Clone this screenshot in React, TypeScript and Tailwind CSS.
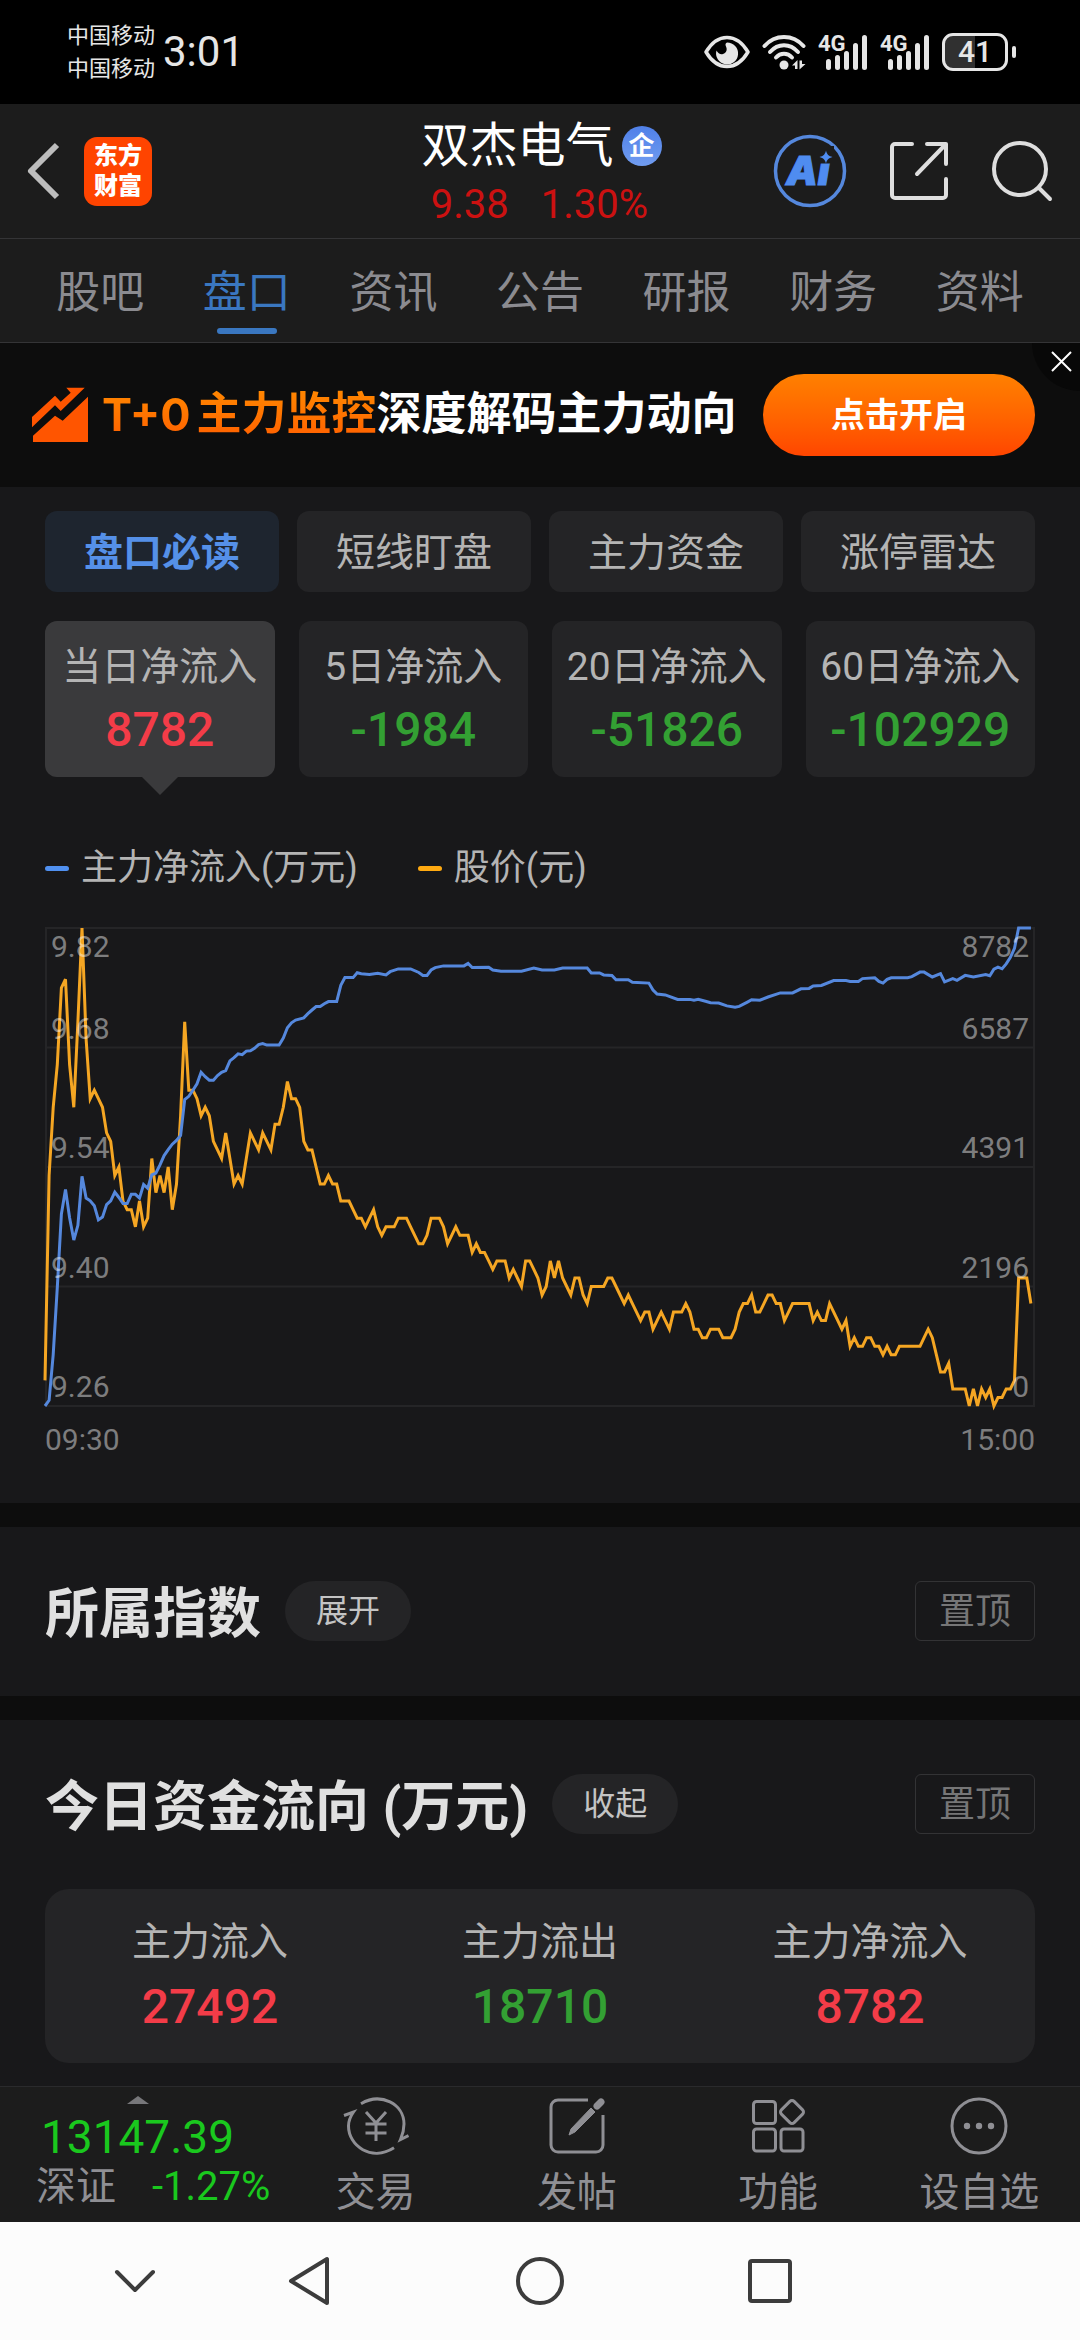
import type { ReactNode } from 'react';

const TABS = ['股吧', '盘口', '资讯', '公告', '研报', '财务', '资料'];
const CHIPS = ['盘口必读', '短线盯盘', '主力资金', '涨停雷达'];
const PERIODS = [
  { label: '当日净流入', value: '8782', up: true },
  { label: '5日净流入', value: '-1984', up: false },
  { label: '20日净流入', value: '-51826', up: false },
  { label: '60日净流入', value: '-102929', up: false },
];
const TOTALS = [
  { label: '主力流入', value: '27492', up: true },
  { label: '主力流出', value: '18710', up: false },
  { label: '主力净流入', value: '8782', up: true },
];

// Price per minute, in cents above 9.26
const PRICE = [
  3, 27, 35, 40, 49, 50, 40, 35, 45, 56, 43, 36, 37, 36, 35, 32, 31, 27, 28, 24, 23, 23, 21, 24, 21, 22, 29, 25, 27, 25,
  28, 23, 26, 34, 45, 37, 37, 36, 34, 35, 34, 31, 30, 29, 32, 29, 26, 27, 26, 29, 32, 31, 30, 32, 31, 30, 33, 33, 35, 38,
  36, 36, 35, 31, 30, 30, 28, 26, 26, 27, 26, 26, 24, 24, 24, 23, 22, 22, 21, 22, 23, 21, 20, 21, 21, 21, 22, 22, 22, 21,
  20, 19, 19, 20, 22, 22, 22, 21, 19, 20, 21, 20, 20, 20, 18, 19, 18, 18, 17, 16, 17, 17, 17, 15, 16, 15, 14, 17, 17, 16,
  15, 13, 14, 17, 15, 17, 15, 14, 13, 15, 15, 13, 12, 14, 14, 14, 14, 15, 15, 14, 13, 12, 13, 12, 11, 10, 11, 11, 9, 10,
  11, 10, 9, 11, 11, 11, 12, 11, 9, 9, 8, 8, 9, 9, 9, 8, 8, 8, 9, 11, 12, 12, 13, 11, 11, 12, 13, 13, 12, 12,
  10, 11, 12, 12, 12, 12, 12, 10, 11, 10, 10, 12, 11, 10, 9, 10, 7, 8, 7, 7, 8, 8, 7, 7, 6, 7, 6, 6, 7, 7,
  7, 7, 7, 7, 8, 9, 8, 6, 4, 4, 5, 2, 2, 2, 2, 0, 2, 0, 2, 1, 2, 0, 1, 1, 2, 2, 3, 15, 15, 15, 12,
];

// [minute, net inflow]
const FLOW: [number, number][] = [
  [0, 0], [1, 105], [2, 945], [3, 2180], [4, 3530], [5, 3980], [6, 3460], [7, 3050], [8, 3320], [9, 4220], [10, 3820],
  [11, 3770], [12, 3680], [13, 3420], [14, 3470], [15, 3700], [16, 3770], [17, 3930], [18, 3830], [19, 3720], [20, 3720],
  [21, 3890], [22, 3890], [23, 3820], [24, 4070], [25, 4000], [26, 4245], [27, 4280], [28, 4430], [29, 4600], [30, 4710],
  [31, 4810], [32, 4880], [33, 4970], [34, 5630], [35, 5690], [36, 5800], [37, 5920], [38, 6130], [39, 6050], [40, 5985],
  [41, 5985], [42, 6070], [43, 6130], [44, 6160], [45, 6340], [46, 6400], [47, 6470], [48, 6455], [49, 6520], [50, 6525],
  [51, 6570], [52, 6640], [53, 6660], [54, 6630], [57, 6630], [58, 6760], [59, 6950], [60, 7040], [61, 7090], [63, 7130],
  [64, 7210], [65, 7275], [66, 7340], [67, 7340], [68, 7390], [69, 7430], [71, 7430], [72, 7730], [73, 7870], [75, 7870],
  [76, 7960], [77, 7940], [79, 7930], [81, 7950], [83, 7920], [84, 7980], [86, 8030], [89, 8030], [91, 7965], [92, 7912],
  [93, 7912], [94, 8010], [95, 8055], [97, 8085], [102, 8085], [103, 8130], [104, 8055], [108, 8060], [109, 8010],
  [111, 7988], [116, 7988], [119, 8047], [121, 8010], [124, 8010], [126, 8047], [132, 8047], [133, 7957], [135, 7957],
  [136, 7920], [138, 7912], [139, 7830], [142, 7830], [143, 7785], [147, 7770], [148, 7642], [149, 7567], [151, 7552],
  [154, 7470], [157, 7470], [158, 7455], [159, 7470], [161, 7432], [162, 7410], [164, 7402], [166, 7350], [168, 7327],
  [169, 7342], [171, 7420], [172, 7462], [174, 7455], [176, 7515], [179, 7590], [182, 7590], [184, 7665], [186, 7672],
  [187, 7717], [189, 7725], [192, 7815], [195, 7815], [196, 7800], [198, 7800], [199, 7852], [202, 7867], [203, 7800],
  [204, 7770], [205, 7837], [206, 7867], [210, 7867], [211, 7890], [213, 7972], [214, 7972], [216, 7882], [218, 7942],
  [219, 7792], [221, 7852], [222, 7822], [224, 7912], [226, 7882], [229, 7927], [230, 7905], [231, 8025], [232, 8062],
  [233, 8032], [234, 8122], [235, 8242], [236, 8407], [237, 8782], [240, 8782],
];

const CHART_W = 990;
const CHART_H = 478;
const STEP = CHART_W / 241;
const pricePoints = PRICE.map((p, i) => `${(i * STEP).toFixed(1)},${(CHART_H * (1 - p / 56)).toFixed(1)}`).join(' ');
const flowPoints = FLOW.map(([i, v]) => `${(i * STEP).toFixed(1)},${(CHART_H * (1 - v / 8782)).toFixed(1)}`).join(' ');

function Signal() {
  return (
    <svg width="50" height="46" viewBox="0 -5 50 46" fill="#e6e6e6" aria-hidden="true">
      <text x="0" y="17" fontSize="22" fontWeight="700" fontFamily="Roboto, sans-serif">4G</text>
      <rect x="8" y="25" width="5" height="11" rx="2.5" />
      <rect x="17" y="21" width="5" height="15" rx="2.5" />
      <rect x="26" y="17" width="5" height="19" rx="2.5" />
      <rect x="35" y="9" width="5" height="27" rx="2.5" />
      <rect x="44" y="1" width="5" height="35" rx="2.5" />
    </svg>
  );
}

function StatusBar() {
  return (
    <div className="flex h-[104px] items-center justify-between bg-black pr-[64px] pl-[67px] text-[#e6e6e6]">
      <div className="flex items-center gap-2">
        <div className="flex flex-col text-[22px] leading-[33px]">
          <span>中国移动</span>
          <span>中国移动</span>
        </div>
        <span className="text-[42px] leading-[50px]">3:01</span>
      </div>
      <div className="flex items-center">
        <svg width="46" height="34" viewBox="0 0 46 34" aria-hidden="true">
          <path d="M2 17C8 7 15 2.500 23 2.500S38 7 44 17C38 27 31 31.500 23 31.500S8 27 2 17Z" fill="none" stroke="#e6e6e6" strokeWidth="3.500" strokeLinejoin="round" />
          <path d="M23 7.500a11 11 0 1 1-10.500 8c1.500 3 4 4.300 6.500 3.500 3.500-1 4.500-4.500 3-7.500-.8-1.800-.8-3 1-4Z" fill="#e6e6e6" />
        </svg>
        <svg className="ml-3" width="44" height="36" viewBox="0 0 44 36" fill="none" stroke="#e6e6e6" strokeWidth="4" strokeLinecap="round" aria-hidden="true">
          <path d="M2.500 12C13 0 31 0 41.500 12" />
          <path d="M8 18C16 9 28 9 36 18" />
          <path d="M14 23.500c4.500-5 11.500-5 16 0" />
          <circle cx="22" cy="31" r="4.500" fill="#e6e6e6" stroke="none" />
          <path d="M35.500 26v9h-2.500v-3.500h-3zM37.500 35.500v-9H40v3.500h3.500z" fill="#e6e6e6" stroke="none" />
        </svg>
        <div className="ml-3 flex items-center gap-3">
          <Signal />
          <Signal />
        </div>
        <div className="ml-3 flex items-center gap-1">
          <span className="flex h-[38px] w-[66px] items-center justify-center rounded-[11px] border-[3px] border-[#e6e6e6] bg-linear-to-r from-[#303030] from-50% to-black to-50% text-[30px] leading-[32px] font-medium">
            41
          </span>
          <span className="h-[12px] w-1 rounded-full bg-[#e6e6e6]" />
        </div>
      </div>
    </div>
  );
}

function Header() {
  return (
    <header className="grid h-[135px] grid-cols-[1fr_auto_1fr] items-center border-b border-[#343436] bg-[#1c1c1c] pr-[27px] pl-[26px]">
      <div className="flex items-center gap-6">
        <button type="button" aria-label="返回">
          <svg width="34" height="58" viewBox="0 0 34 58" fill="none" stroke="#bdbdbd" strokeWidth="6" aria-hidden="true">
            <path d="M31 3 5 29l26 26" strokeLinejoin="round" />
          </svg>
        </button>
        <span className="flex h-[69px] w-[68px] flex-col items-center justify-center rounded-[13px] bg-[#ff4400] text-[24px] leading-[30px] font-black text-white">
          <span>东方</span>
          <span>财富</span>
        </span>
      </div>
      <div className="flex flex-col items-center pt-2">
        <div className="flex items-center gap-2 pl-1">
          <h1 className="text-[48px] leading-[60px] text-white">双杰电气</h1>
          <span className="flex size-[40px] items-center justify-center rounded-full bg-linear-to-b from-[#5080e8] to-[#709cf0] text-[26px] leading-[30px] font-bold text-white">
            企
          </span>
        </div>
        <div className="flex gap-8 text-[40px] leading-[58px] text-[#cc1111]">
          <span>9.38</span>
          <span>1.30%</span>
        </div>
      </div>
      <div className="flex items-center justify-end gap-[42px]">
        <button type="button" aria-label="AI助手">
          <svg width="74" height="74" viewBox="0 0 74 74" aria-hidden="true">
            <circle cx="37" cy="37" r="34.500" fill="none" stroke="#5588dd" strokeWidth="3.500" />
            <text x="13" y="51" fontSize="40" fontWeight="900" fontStyle="italic" fill="#4f8cf0" stroke="#4f8cf0" strokeWidth="1" fontFamily="Inter, sans-serif">Ai</text>
            <path d="M43 12h18v17.500H43z" fill="#1c1c1c" />
            <path d="M53 16.500c1 4 2.500 5.500 6.500 6.500-4 1-5.500 2.500-6.500 6.500-1-4-2.500-5.500-6.500-6.500 4-1 5.500-2.500 6.500-6.500Z" fill="#4f8cf0" />
          </svg>
        </button>
        <button type="button" aria-label="分享">
          <svg width="60" height="60" viewBox="0 0 60 60" fill="none" stroke="#dedede" strokeWidth="4" strokeLinecap="round" strokeLinejoin="round" aria-hidden="true">
            <path d="M23 3H6a3 3 0 0 0-3 3v48a3 3 0 0 0 3 3h48a3 3 0 0 0 3-3V38" />
            <path d="M38 3h19v20M57 3 28 33" />
          </svg>
        </button>
        <button type="button" aria-label="搜索">
          <svg width="62" height="62" viewBox="0 0 62 62" fill="none" stroke="#dedede" strokeWidth="4" strokeLinecap="round" aria-hidden="true">
            <circle cx="29" cy="29" r="26" />
            <path d="m48 48 11 11" />
          </svg>
        </button>
      </div>
    </header>
  );
}

function TabBar() {
  return (
    <nav className="grid h-[104px] grid-cols-7 border-b border-[#343436] bg-[#1c1c1c] px-[27px]">
      {TABS.map((tab) => {
        const active = tab === '盘口';
        return (
          <button key={tab} type="button" className={`flex flex-col items-center pt-6 text-[44px] leading-[60px] ${active ? 'text-[#3a77c0]' : 'text-[#8b8b90]'}`}>
            {tab}
            {active && <span className="mt-[5px] h-[6px] w-[60px] rounded-full bg-[#3a77c0]" />}
          </button>
        );
      })}
    </nav>
  );
}

function Banner() {
  return (
    <div className="relative flex h-[144px] items-center justify-between bg-[#0d0d0d] pr-[45px] pl-[31px]">
      <div className="flex items-center gap-[13px]">
        <svg width="58" height="56" viewBox="0 0 58 56" fill="#ff5500" aria-hidden="true">
          <path d="M1 30 24 8.700l5.700 6 10-9L35.300.7h18.400L29.700 24 24 18.300l-23 22z" />
          <path d="M2 48.700l22-20 7.700 5L57 9.700V55H2z" />
        </svg>
        <p className="flex items-center text-[45px] leading-[60px] font-bold whitespace-nowrap text-white">
          <span className="flex items-center gap-[6px] bg-linear-to-b from-[#ff8a00] to-[#ff5a00] bg-clip-text text-transparent">
            <span className="font-[Inter]">T+0</span>
            <span>主力监控</span>
          </span>
          <span>深度解码主力动向</span>
        </p>
      </div>
      <button type="button" className="h-[82px] w-[272px] rounded-full bg-linear-to-b from-[#ff8000] to-[#ff4500] text-[34px] leading-[48px] font-bold text-white">
        点击开启
      </button>
      <button type="button" aria-label="关闭" className="absolute top-0 right-0 flex h-[48px] w-[48px] items-start justify-end rounded-bl-full bg-[#080808] pt-2 pr-2">
        <svg width="21" height="21" viewBox="0 0 21 21" fill="none" stroke="#ffffff" strokeWidth="2" aria-hidden="true">
          <path d="m1 1 19 19M20 1 1 20" />
        </svg>
      </button>
    </div>
  );
}

function AxisLabels({ values, end }: { values: string[]; end?: boolean }) {
  return (
    <div className={`col-start-1 row-start-1 grid grid-rows-4 px-[6px] text-[30px] leading-[38px] text-white/45 ${end ? 'justify-self-end text-right' : 'justify-self-start'}`}>
      {values.slice(1).map((value, i) => (
        <div key={value} className="flex flex-col justify-between">
          <span>{i === 0 ? values[0] : ''}</span>
          <span>{value}</span>
        </div>
      ))}
    </div>
  );
}

function FlowChart() {
  return (
    <figure>
      <figcaption className="mt-16 flex h-[54px] items-center gap-[60px] text-[36px] leading-[54px] text-[#b4b4b4]">
        <span className="flex items-center gap-3">
          <span className="h-[5px] w-6 rounded-full bg-[#5090f0]" />
          主力净流入(万元)
        </span>
        <span className="flex items-center gap-3">
          <span className="h-[5px] w-6 rounded-full bg-[#ffaa11]" />
          股价(元)
        </span>
      </figcaption>
      <div className="mt-[33px] grid h-[478px]">
        <svg className="col-start-1 row-start-1 h-[478px] w-full overflow-visible" viewBox={`0 0 ${CHART_W} ${CHART_H}`} preserveAspectRatio="none" fill="none" role="img" aria-label="主力净流入与股价走势">
          <g stroke="#252527" strokeWidth="2">
            <path d="M0 0H990M0 119.500H990M0 239H990M0 358.500H990M0 478H990M1 0V478M989 0V478" />
          </g>
          <polyline points={pricePoints} stroke="#f5a623" strokeWidth="3" />
          <polyline points={flowPoints} stroke="#5588dd" strokeWidth="3" />
        </svg>
        <AxisLabels values={['9.82', '9.68', '9.54', '9.40', '9.26']} />
        <AxisLabels values={['8782', '6587', '4391', '2196', '0']} end />
      </div>
      <div className="mt-[15px] flex justify-between text-[30px] leading-[38px] text-[#7d7d7e]">
        <span>09:30</span>
        <span>15:00</span>
      </div>
    </figure>
  );
}

function SectionHead({ title, action }: { title: string; action: string }) {
  return (
    <div className="flex h-[60px] items-center">
      <h2 className="pt-2 text-[54px] leading-[60px] font-bold text-[#e0e0e0]">{title}</h2>
      <button type="button" className="ml-6 h-[60px] w-[126px] rounded-full bg-[#242426] text-[32px] leading-[60px] text-[#c4c4c4]">
        {action}
      </button>
      <button type="button" className="ml-auto h-[60px] w-[120px] rounded-[6px] border border-[#333335] text-[36px] leading-[60px] text-[#767677]">
        置顶
      </button>
    </div>
  );
}

function BottomItem({ label, children }: { label: string; children: ReactNode }) {
  return (
    <button type="button" className="flex flex-1 flex-col items-center pt-[6px] text-[40px] leading-[56px] text-[#8f8f94]">
      <svg width="66" height="66" viewBox="0 0 66 66" fill="none" stroke="currentColor" strokeWidth="3" aria-hidden="true">
        {children}
      </svg>
      <span className="mt-[6px]">{label}</span>
    </button>
  );
}

function BottomBar() {
  return (
    <footer className="flex h-[136px] border-t border-[#2a2a2c] bg-[#1c1c1c]">
      <button type="button" className="flex w-[275px] flex-col items-center pt-[9px] text-[#1ac81e]">
        <svg width="22" height="8" viewBox="0 0 22 8" fill="#77777a" aria-hidden="true">
          <path d="M0 8 11 0l11 8z" />
        </svg>
        <span className="mt-[7px] text-[46px] leading-[52px]">13147.39</span>
        <span className="ml-9 flex items-center gap-9 self-start text-[40px] leading-[48px] whitespace-nowrap">
          <span className="text-[#8f8f94]">深证</span>
          <span>-1.27%</span>
        </span>
      </button>
      <div className="flex flex-1">
        <BottomItem label="交易">
          <path d="M18 10.700C38-1 61 11 61 31c0 6-1.500 11-3.500 15.500L65.500 42.500" />
          <path d="M1 22.500 10.500 19C7 24 5.500 28 5.500 33c0 20 23 36 45.500 21.700" />
          <path d="m23 19 10 11 10-11M22.500 31h21M22.500 40h21M33 30v18" />
        </BottomItem>
        <BottomItem label="发帖">
          <path d="M44 7H14a7 7 0 0 0-7 7v38a7 7 0 0 0 7 7h38a7 7 0 0 0 7-7V22" />
          <path d="m25 42 2-6 20-21 4 4-20 20z" fill="currentColor" strokeWidth="1" />
          <path d="m53 13 4-4" strokeWidth="7" strokeLinecap="round" />
        </BottomItem>
        <BottomItem label="功能">
          <rect x="8.500" y="8.500" width="22" height="22" rx="3" />
          <rect x="8.500" y="36" width="22" height="22" rx="3" />
          <rect x="36" y="36" width="22" height="22" rx="3" />
          <rect x="38" y="10" width="18" height="18" rx="3" transform="rotate(45 47 19)" />
        </BottomItem>
        <BottomItem label="设自选">
          <circle cx="33" cy="33" r="27" />
          <g fill="currentColor" stroke="none">
            <circle cx="21" cy="33" r="3.200" />
            <circle cx="33" cy="33" r="3.200" />
            <circle cx="45" cy="33" r="3.200" />
          </g>
        </BottomItem>
      </div>
    </footer>
  );
}

const NAV_KEYS = [
  { name: '收起', art: <path d="m7 16 18 18 18-18" /> },
  { name: '后退', art: <path d="M42 3v44L6 25z" /> },
  { name: '主屏幕', art: <circle cx="25" cy="25" r="22" /> },
  { name: '最近任务', art: <rect x="5" y="5" width="40" height="40" rx="2" /> },
];

function SystemNav() {
  return (
    <nav className="flex h-[118px] items-center bg-[#fcfcfc] pr-[195px] pl-[75px]">
      {NAV_KEYS.map((key, i) => (
        <button key={key.name} type="button" aria-label={key.name} className={`flex justify-center ${i === 0 ? 'basis-[120px]' : 'flex-1'}`}>
          <svg width="50" height="50" viewBox="0 0 50 50" fill="none" stroke="#3c3c3c" strokeWidth="4" strokeLinecap="round" strokeLinejoin="round" aria-hidden="true">
            {key.art}
          </svg>
        </button>
      ))}
    </nav>
  );
}

export default function App() {
  return (
    <div className="flex min-h-screen flex-col bg-[#0d0d0d] font-[Roboto,'Noto_Sans_CJK_SC',sans-serif]">
      <StatusBar />
      <Header />
      <TabBar />
      <Banner />
      <main className="flex flex-1 flex-col gap-6">
        <section className="bg-[#18181a] px-[45px] pt-6 pb-[44px]">
          <div className="grid grid-cols-4 gap-[18px]">
            {CHIPS.map((chip, i) => (
              <button
                key={chip}
                type="button"
                className={`h-[81px] rounded-[12px] pt-[2px] text-[39px] leading-[54px] ${i === 0 ? 'bg-[#1e252f] font-bold text-[#5590e8]' : 'bg-[#242426] text-[#b4b4b4]'}`}
              >
                {chip}
              </button>
            ))}
          </div>
          <div className="mt-[29px] grid grid-cols-4 gap-6">
            {PERIODS.map((item, i) => (
              <button
                key={item.label}
                type="button"
                className={`relative flex h-[156px] flex-col items-center rounded-[12px] pt-[19px] ${i === 0 ? 'bg-[#3a3a3c]' : 'bg-[#242426]'}`}
              >
                <span className="text-[39px] leading-[54px] whitespace-nowrap text-[#b4b4b4]">{item.label}</span>
                <span className={`text-[48px] leading-[72px] font-medium ${item.up ? 'text-[#f33c48]' : 'text-[#33a033]'}`}>{item.value}</span>
                {i === 0 && (
                  <svg className="absolute top-full" width="36" height="18" viewBox="0 0 36 18" fill="#3a3a3c" aria-hidden="true">
                    <path d="M0 0h36L18 18z" />
                  </svg>
                )}
              </button>
            ))}
          </div>
          <FlowChart />
        </section>
        <section className="bg-[#18181a] px-[45px] pt-[54px] pb-[55px]">
          <SectionHead title="所属指数" action="展开" />
        </section>
        <section className="flex-1 bg-[#18181a] px-[45px] pt-[54px] pb-[23px]">
          <SectionHead title="今日资金流向 (万元)" action="收起" />
          <dl className="mt-[55px] grid h-[174px] grid-cols-3 rounded-[24px] bg-[#242426] pt-[26px] text-center">
            {TOTALS.map((item) => (
              <div key={item.label}>
                <dt className="text-[39px] leading-[54px] text-[#b4b4b4]">{item.label}</dt>
                <dd className={`text-[48px] leading-[76px] font-medium ${item.up ? 'text-[#f33c48]' : 'text-[#33a033]'}`}>{item.value}</dd>
              </div>
            ))}
          </dl>
        </section>
      </main>
      <BottomBar />
      <SystemNav />
    </div>
  );
}
